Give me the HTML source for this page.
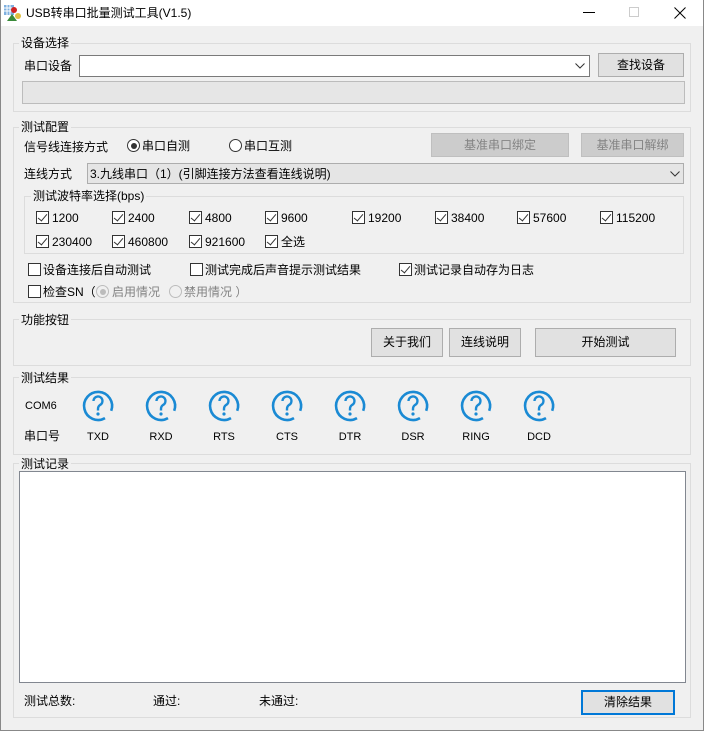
<!DOCTYPE html>
<html><head><meta charset="utf-8"><style>
*{margin:0;padding:0;box-sizing:border-box}
body{width:704px;height:731px;background:#f0f0f0;font-family:"Liberation Sans","Noto Sans CJK SC",sans-serif;font-size:12px;color:#000;position:relative;overflow:hidden}
.a{position:absolute;white-space:nowrap;line-height:14px}
.g{position:absolute;border:1px solid #dcdcdc}
.gl{position:absolute;background:#f0f0f0;padding:0 2px;line-height:14px}
.btn{position:absolute;background:#e1e1e1;border:1px solid #adadad;text-align:center;font-size:12px}
.dis{background:#cccccc;border-color:#bfbfbf;color:#838383}
.cb{position:absolute;width:13px;height:13px;border:1px solid #333;background:#fff}
.cb.c::after{content:"";position:absolute;left:3px;top:0px;width:4px;height:8px;border:solid #333;border-width:0 1.3px 1.3px 0;transform:rotate(40deg)}
.rd{position:absolute;width:13px;height:13px;border:1px solid #333;border-radius:50%;background:#fff}
.rd.on::after{content:"";position:absolute;left:2.5px;top:2.5px;width:6px;height:6px;border-radius:50%;background:#333}
.rd.d{border-color:#bcbcbc;background:#f0f0f0}
.rd.d.on::after{background:#bcbcbc}
</style></head><body>
<div style="position:absolute;left:0;top:0;width:704px;height:731px;border:1px solid #888;border-top:none"></div>
<div style="position:absolute;left:1px;top:0;width:702px;height:26px;background:#fff"></div>
<svg style="position:absolute;left:4px;top:5px" width="18" height="17" viewBox="0 0 18 17"><rect x="0" y="0" width="10" height="10" fill="#7fb0e0"/><path d="M0 3h10M0 6h10M3 0v10M6 0v10" stroke="#fff" stroke-width="1"/><circle cx="10" cy="5" r="3" fill="#d02020"/><path d="M3 16l5-7 5 7z" fill="#3a8a3a"/><circle cx="14" cy="11" r="3" fill="#e0c040"/></svg>
<div class="a" style="left:26px;top:6px;font-size:12px">USB转串口批量测试工具(V1.5)</div>
<div class="a" style="left:583px;top:12px;width:12px;height:1px;background:#000"></div>
<div class="a" style="left:629px;top:7px;width:10px;height:10px;border:1px solid #ccc"></div>
<svg style="position:absolute;left:674px;top:7px" width="12" height="12"><path d="M0.5 0.5L11.5 11.5M11.5 0.5L0.5 11.5" stroke="#000" stroke-width="1"/></svg>

<div class="g" style="left:13px;top:43px;width:678px;height:69px"></div>
<div class="gl" style="left:19px;top:36px">设备选择</div>
<div class="a" style="left:24px;top:59px">串口设备</div>
<div style="position:absolute;left:79px;top:55px;width:511px;height:22px;background:#fff;border:1px solid #7a7a7a"></div>
<svg style="position:absolute;left:575px;top:63px" width="10" height="6"><path d="M0.5 0.5l4.5 4.5 4.5-4.5" stroke="#333" fill="none"/></svg>
<div class="btn" style="left:598px;top:53px;width:86px;height:24px;line-height:22px">查找设备</div>
<div style="position:absolute;left:22px;top:81px;width:663px;height:23px;background:#e6e6e6;border:1px solid #bcbcbc"></div>

<div class="g" style="left:13px;top:127px;width:678px;height:176px"></div>
<div class="gl" style="left:19px;top:120px">测试配置</div>
<div class="a" style="left:24px;top:140px">信号线连接方式</div>
<div class="rd on" style="left:127px;top:139px"></div>
<div class="a" style="left:142px;top:139px">串口自测</div>
<div class="rd" style="left:229px;top:139px"></div>
<div class="a" style="left:244px;top:139px">串口互测</div>
<div class="btn dis" style="left:431px;top:133px;width:138px;height:24px;line-height:22px">基准串口绑定</div>
<div class="btn dis" style="left:581px;top:133px;width:103px;height:24px;line-height:22px">基准串口解绑</div>
<div class="a" style="left:24px;top:167px">连线方式</div>
<div style="position:absolute;left:87px;top:163px;width:597px;height:21px;background:#e5e5e5;border:1px solid #adadad"></div>
<div class="a" style="left:90px;top:167px">3.九线串口（1）(引脚连接方法查看连线说明)</div>
<svg style="position:absolute;left:670px;top:171px" width="10" height="6"><path d="M0.5 0.5l4.5 4.5 4.5-4.5" stroke="#333" fill="none"/></svg>

<div class="g" style="left:24px;top:196px;width:660px;height:58px"></div>
<div class="gl" style="left:31px;top:189px">测试波特率选择(bps)</div>
<div class="cb c" style="left:36px;top:211px"></div><div class="a" style="left:52px;top:211px">1200</div>
<div class="cb c" style="left:112px;top:211px"></div><div class="a" style="left:128px;top:211px">2400</div>
<div class="cb c" style="left:189px;top:211px"></div><div class="a" style="left:205px;top:211px">4800</div>
<div class="cb c" style="left:265px;top:211px"></div><div class="a" style="left:281px;top:211px">9600</div>
<div class="cb c" style="left:352px;top:211px"></div><div class="a" style="left:368px;top:211px">19200</div>
<div class="cb c" style="left:435px;top:211px"></div><div class="a" style="left:451px;top:211px">38400</div>
<div class="cb c" style="left:517px;top:211px"></div><div class="a" style="left:533px;top:211px">57600</div>
<div class="cb c" style="left:600px;top:211px"></div><div class="a" style="left:616px;top:211px">115200</div>
<div class="cb c" style="left:36px;top:235px"></div><div class="a" style="left:52px;top:235px">230400</div>
<div class="cb c" style="left:112px;top:235px"></div><div class="a" style="left:128px;top:235px">460800</div>
<div class="cb c" style="left:189px;top:235px"></div><div class="a" style="left:205px;top:235px">921600</div>
<div class="cb c" style="left:265px;top:235px"></div><div class="a" style="left:281px;top:235px">全选</div>

<div class="cb" style="left:28px;top:263px"></div><div class="a" style="left:43px;top:263px">设备连接后自动测试</div>
<div class="cb" style="left:190px;top:263px"></div><div class="a" style="left:205px;top:263px">测试完成后声音提示测试结果</div>
<div class="cb c" style="left:399px;top:263px"></div><div class="a" style="left:414px;top:263px">测试记录自动存为日志</div>
<div class="cb" style="left:28px;top:285px"></div><div class="a" style="left:43px;top:285px">检查SN（</div>
<div class="rd d on" style="left:96px;top:285px"></div><div class="a" style="left:112px;top:285px;color:#838383">启用情况</div>
<div class="rd d" style="left:169px;top:285px"></div><div class="a" style="left:184px;top:285px;color:#838383">禁用情况 ）</div>

<div class="g" style="left:13px;top:319px;width:678px;height:47px"></div>
<div class="gl" style="left:19px;top:313px">功能按钮</div>
<div class="btn" style="left:371px;top:328px;width:72px;height:29px;line-height:27px">关于我们</div>
<div class="btn" style="left:449px;top:328px;width:72px;height:29px;line-height:27px">连线说明</div>
<div class="btn" style="left:535px;top:328px;width:141px;height:29px;line-height:27px">开始测试</div>

<div class="g" style="left:13px;top:377px;width:678px;height:78px"></div>
<div class="gl" style="left:19px;top:371px">测试结果</div>
<div class="a" style="left:25px;top:399px;font-size:11px;color:#000">COM6</div>
<div class="a" style="left:24px;top:429px">串口号</div>
<svg style="position:absolute;left:0;top:0" width="704" height="731">
<defs><g id="q"><path d="M13.2 4.8A14 14 0 1 0 7 12.1" fill="none" stroke="#1a8ad4" stroke-width="2.6"/><path d="M-4.5 -5a4.5 4.5 0 1 1 6.5 4c-1.5 1-2 2-2 4v1.5" fill="none" stroke="#1a8ad4" stroke-width="2.4"/><circle cx="0" cy="8" r="1.6" fill="#1a8ad4"/></g></defs>
<use href="#q" x="98" y="406"/><use href="#q" x="161" y="406"/><use href="#q" x="224" y="406"/><use href="#q" x="287" y="406"/><use href="#q" x="350" y="406"/><use href="#q" x="413" y="406"/><use href="#q" x="476" y="406"/><use href="#q" x="539" y="406"/>
</svg>
<div class="a" style="left:78px;top:430px;width:40px;text-align:center;font-size:11px">TXD</div>
<div class="a" style="left:141px;top:430px;width:40px;text-align:center;font-size:11px">RXD</div>
<div class="a" style="left:204px;top:430px;width:40px;text-align:center;font-size:11px">RTS</div>
<div class="a" style="left:267px;top:430px;width:40px;text-align:center;font-size:11px">CTS</div>
<div class="a" style="left:330px;top:430px;width:40px;text-align:center;font-size:11px">DTR</div>
<div class="a" style="left:393px;top:430px;width:40px;text-align:center;font-size:11px">DSR</div>
<div class="a" style="left:456px;top:430px;width:40px;text-align:center;font-size:11px">RING</div>
<div class="a" style="left:519px;top:430px;width:40px;text-align:center;font-size:11px">DCD</div>

<div class="g" style="left:13px;top:463px;width:678px;height:255px"></div>
<div class="gl" style="left:19px;top:457px">测试记录</div>
<div style="position:absolute;left:19px;top:471px;width:667px;height:212px;background:#fff;border:1px solid #828790"></div>
<div class="a" style="left:24px;top:694px">测试总数:</div>
<div class="a" style="left:153px;top:694px">通过:</div>
<div class="a" style="left:259px;top:694px">未通过:</div>
<div class="btn" style="left:581px;top:690px;width:94px;height:25px;line-height:21px;border:2px solid #0078d7">清除结果</div>
</body></html>
